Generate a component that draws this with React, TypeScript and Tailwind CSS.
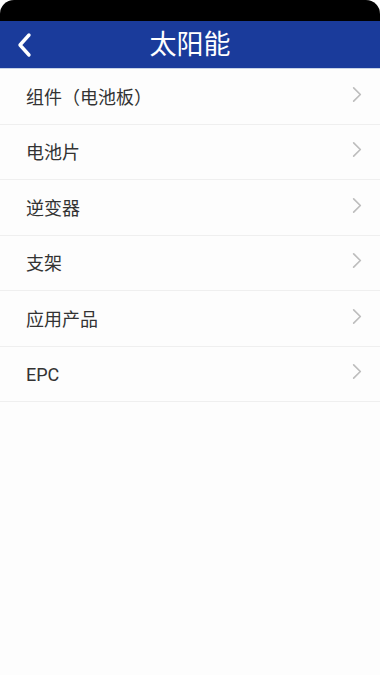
import React from 'react';

const ITEMS = ['组件（电池板）', '电池片', '逆变器', '支架', '应用产品', 'EPC'];

function Chevron({ className }: { className?: string }) {
  return (
    <svg viewBox="0 0 12 20" className={className} fill="none">
      <path d="M2 2l8 8-8 8" stroke="currentColor" strokeWidth="2" strokeLinecap="round" strokeLinejoin="round" />
    </svg>
  );
}

export default function App() {
  return (
    <div
      className="w-[380px] h-[675px] bg-[#fdfdfd] flex flex-col overflow-hidden"
      style={{ fontFamily: 'Roboto, "Noto Sans CJK SC", sans-serif' }}
    >
      {/* Status bar */}
      <div className="h-[21px] bg-black rounded-t-[14px] shrink-0" />

      {/* Header */}
      <div className="h-[48px] bg-[#1a3b9b] flex items-center relative shrink-0 border-b border-[#c7d2e6]">
        <button className="absolute left-[17px] top-[11px] text-white" aria-label="back">
          <svg viewBox="0 0 16 26" className="w-[16px] h-[26px]" fill="none">
            <path d="M12 3L3 13l9 10" stroke="currentColor" strokeWidth="3.4" strokeLinecap="round" strokeLinejoin="round" />
          </svg>
        </button>
        <p className="flex-1 text-center text-white text-[27px] leading-none pt-[2px]">太阳能</p>
      </div>

      {/* List */}
      <div className="flex flex-col">
        {ITEMS.map((item) => (
          <div
            key={item}
            className="h-[55.5px] flex items-center justify-between pl-[26px] pr-[18px] border-b border-[#efefef]"
          >
            <span className="text-[18px] text-[#333333] pt-[2px]">{item}</span>
            <Chevron className="w-[10px] h-[17px] text-[#bdbdbd] -mt-[4px]" />
          </div>
        ))}
      </div>
    </div>
  );
}
